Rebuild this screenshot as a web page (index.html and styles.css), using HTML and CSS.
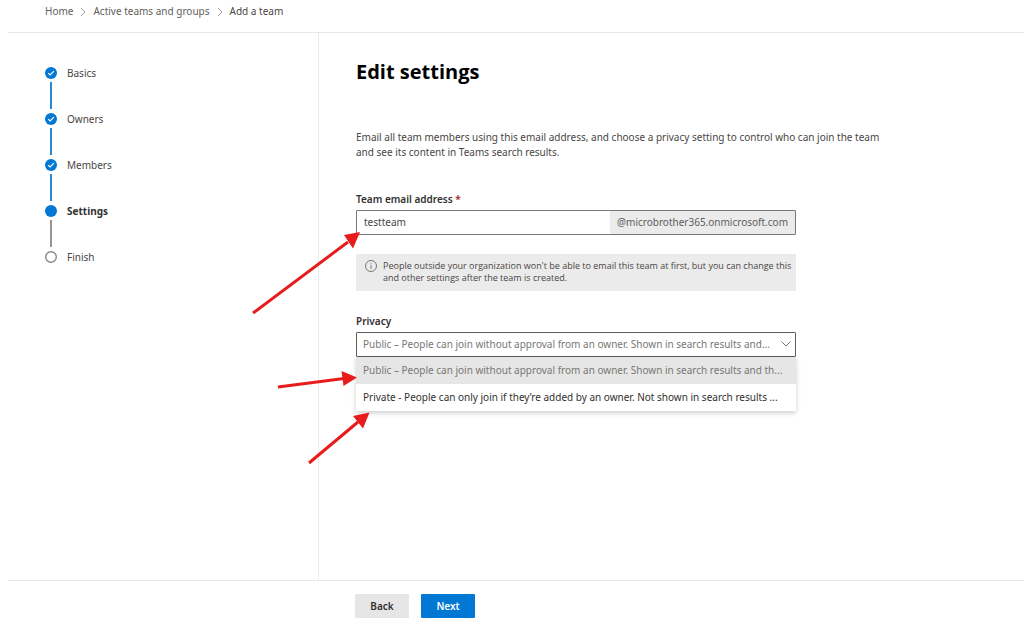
FILE: index.html
```html
<!DOCTYPE html>
<html lang="en">
<head>
<meta charset="utf-8">
<meta name="viewport" content="width=device-width, initial-scale=1">
<title>Add a team</title>
<link rel="stylesheet" href="styles.css">
</head>
<body>
<div class="page">
  <nav class="breadcrumb" aria-label="Breadcrumb">
    <a class="crumb" href="#">Home</a>
    <svg class="crumb-sep" viewBox="0 0 6 10" aria-hidden="true"><path d="M1 1l4 4-4 4"/></svg>
    <a class="crumb" href="#">Active teams and groups</a>
    <svg class="crumb-sep" viewBox="0 0 6 10" aria-hidden="true"><path d="M1 1l4 4-4 4"/></svg>
    <a class="crumb crumb-current" href="#" aria-current="page">Add a team</a>
  </nav>

  <div class="wizard">
    <aside class="sidebar">
      <ol class="steps">
        <li class="step step-done"><svg class="dot" viewBox="0 0 12 12" aria-hidden="true"><circle cx="6" cy="6" r="6"/><path d="M3.2 6.1l1.9 1.9 3.8-3.8"/></svg><span>Basics</span></li>
        <li class="step step-done"><svg class="dot" viewBox="0 0 12 12" aria-hidden="true"><circle cx="6" cy="6" r="6"/><path d="M3.2 6.1l1.9 1.9 3.8-3.8"/></svg><span>Owners</span></li>
        <li class="step step-done"><svg class="dot" viewBox="0 0 12 12" aria-hidden="true"><circle cx="6" cy="6" r="6"/><path d="M3.2 6.1l1.9 1.9 3.8-3.8"/></svg><span>Members</span></li>
        <li class="step step-current" aria-current="step"><svg class="dot" viewBox="0 0 12 12" aria-hidden="true"><circle cx="6" cy="6" r="6"/></svg><span>Settings</span></li>
        <li class="step step-todo"><svg class="dot" viewBox="0 0 12 12" aria-hidden="true"><circle cx="6" cy="6" r="5.3"/></svg><span>Finish</span></li>
      </ol>
    </aside>

    <main class="content">
      <h1 class="title">Edit settings</h1>
      <p class="intro">Email all team members using this email address, and choose a privacy setting to control who can join the team and see its content in Teams search results.</p>

      <form class="form">
        <label class="label" for="email">Team email address <span class="required">*</span></label>
        <div class="email-field">
          <input class="email-input" id="email" type="text" value="testteam">
          <span class="email-suffix">@microbrother365.onmicrosoft.com</span>
        </div>

        <div class="notice">
          <svg class="notice-icon" viewBox="0 0 12 12" aria-hidden="true"><circle cx="6" cy="6" r="5.5"/><path d="M6 5.2v3.6M6 3.2v1"/></svg>
          <p class="notice-text">People outside your organization won't be able to email this team at first, but you can change this and other settings after the team is created.</p>
        </div>

        <label class="label" for="privacy">Privacy</label>
        <div class="dropdown">
          <select class="select" id="privacy">
            <option>Public – People can join without approval from an owner. Shown in search results and...</option>
            <option>Private - People can only join if they’re added by an owner. Not shown in search results ...</option>
          </select>
          <svg class="chevron" viewBox="0 0 10 6" aria-hidden="true"><path d="M.5.5L5 5 9.500.5"/></svg>
          <ul class="menu" role="listbox" aria-label="Privacy">
            <li class="menu-item menu-item-selected" role="option" aria-selected="true">Public – People can join without approval from an owner. Shown in search results and th...</li>
            <li class="menu-item" role="option" aria-selected="false">Private - People can only join if they’re added by an owner. Not shown in search results ...</li>
          </ul>
        </div>
      </form>
    </main>
  </div>

  <footer class="footer">
    <button class="button" type="button">Back</button>
    <button class="button button-primary" type="button">Next</button>
  </footer>
</div>

<svg class="arrows" viewBox="0 0 120 240" aria-hidden="true">
  <path class="shaft" d="M3 83L98 12M28 157L94 148.500M59 233L108 192"/>
  <path class="head" d="M110 2L94 5l9 13.500zM107 147.500L91.500 141l2 15zM119.500 182.500L103 186l10 12.500z"/>
</svg>
</body>
</html>
```
FILE: styles.css
```css
* {
  box-sizing: border-box;
}

body {
  margin: 0;
  background: #fff;
  color: #484644;
  font-family: "Noto Sans", "Open Sans", sans-serif;
  font-size: 10px;
  line-height: 15px;
}

.page {
  display: flex;
  flex-direction: column;
  min-height: 100vh;
  padding-left: 8px;
}

.breadcrumb {
  display: flex;
  align-items: center;
  gap: 7px;
  padding: 4px 37px 13px;
  border-bottom: 1px solid #e8e8e8;
}

.crumb {
  color: #605e5c;
  text-decoration: none;
}

.crumb-current {
  color: #484644;
}

.crumb-sep {
  width: 6px;
  height: 10px;
  fill: none;
  stroke: #a19f9d;
}

.wizard {
  display: flex;
  flex: 1;
}

.sidebar {
  flex: 0 0 311px;
  padding: 32px 37px;
  border-right: 1px solid #ebebeb;
}

.steps {
  display: flex;
  flex-direction: column;
  gap: 30px;
  margin: 0;
  padding: 0;
  list-style: none;
}

.step {
  position: relative;
  display: flex;
  align-items: center;
  gap: 10px;
  line-height: 16px;
}

.step:not(:last-child)::after {
  content: "";
  position: absolute;
  top: 17px;
  left: 5px;
  width: 2px;
  height: 27px;
  background: #2b88d8;
}

.step.step-current::after {
  background: #979593;
}

.step-current {
  color: #323130;
  font-weight: 700;
}

.dot {
  width: 12px;
  height: 12px;
  fill: #0078d4;
}

.dot path {
  fill: none;
  stroke: #fff;
  stroke-width: 1.200;
}

.step-todo .dot {
  fill: #fff;
  stroke: #8a8886;
  stroke-width: 1.400;
}

.content {
  flex: 1;
  min-width: 0;
  padding: 24px 37px;
}

.title {
  margin: 0 0 43px;
  color: #000;
  font-family: "Open Sans", "Noto Sans", sans-serif;
  font-size: 20px;
  font-weight: 700;
  line-height: 30px;
}

.intro {
  max-width: 540px;
  margin: 0 0 32px;
}

.form {
  max-width: 440px;
}

.label {
  display: block;
  margin-bottom: 3px;
  color: #323130;
  font-weight: 600;
}

.required {
  color: #a4262c;
}

.email-field {
  display: flex;
  height: 25px;
  border: 1px solid #797775;
  border-radius: 1px;
}

.email-input {
  flex: 1;
  min-width: 0;
  padding: 0 7px;
  border: 0;
  outline: 0;
  background: none;
  color: #484644;
  font: inherit;
}

.email-suffix {
  padding: 4px 7px;
  background: #ebebeb;
  color: #605e5c;
}

.notice {
  display: flex;
  gap: 6px;
  margin: 19px 0 23px;
  padding: 6px 0 7px 9px;
  background: #ebebeb;
}

.notice-icon {
  flex: none;
  width: 12px;
  height: 12px;
  fill: none;
  stroke: #797775;
}

.notice-text {
  margin: 0;
  font-family: "Open Sans", "Noto Sans", sans-serif;
  font-size: 9px;
  line-height: 12px;
}

.dropdown {
  position: relative;
}

.select {
  display: block;
  width: 100%;
  height: 25px;
  padding: 0 18px 0 6px;
  border: 1px solid #605e5c;
  border-radius: 1px;
  outline: 0;
  background: #fff;
  color: #797775;
  font: inherit;
  appearance: none;
}

.chevron {
  position: absolute;
  top: 9px;
  right: 5px;
  width: 10px;
  height: 6px;
  fill: none;
  stroke: #797775;
  pointer-events: none;
}

.menu {
  position: absolute;
  top: 100%;
  right: 0;
  left: 0;
  margin: 0;
  padding: 0;
  background: #fff;
  box-shadow: 0 2px 5px rgba(0, 0, 0, 0.2);
  list-style: none;
}

.menu-item {
  overflow: hidden;
  padding: 6px 7px;
  color: #323130;
  white-space: nowrap;
}

.menu-item-selected {
  background: #e6e6e6;
  color: #797775;
}

.footer {
  display: flex;
  gap: 12px;
  padding: 13px 0 4px 347px;
  border-top: 1px solid #e8e8e8;
}

.button {
  width: 54px;
  height: 24px;
  padding: 0;
  border: 0;
  border-radius: 1px;
  background: #e6e6e6;
  color: #323130;
  font: inherit;
  font-weight: 600;
}

.button-primary {
  background: #0078d4;
  color: #fff;
}

.arrows {
  position: absolute;
  top: 230px;
  left: 250px;
  width: 120px;
  height: 240px;
  pointer-events: none;
}

.shaft {
  fill: none;
  stroke: #e81c1c;
  stroke-width: 3;
}

.head {
  fill: #e81c1c;
}
```
